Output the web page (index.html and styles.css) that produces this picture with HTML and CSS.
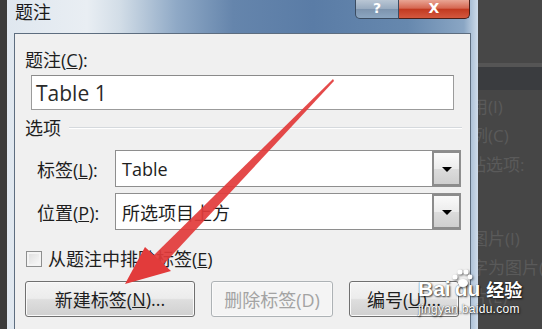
FILE: index.html
```html
<!DOCTYPE html>
<html lang="zh-CN">

<head>
  <meta charset="UTF-8">
  <meta name="viewport" content="width=device-width, initial-scale=1.0">
  <title>题注</title>
  <link rel="stylesheet" href="styles.css">
</head>

<body>
  <div class="screen">
    <div class="edge"></div>

    <div class="window">
      <div class="titlebar">
        <span class="title">题注</span>
        <div class="caption-buttons">
          <span class="btn-help">?</span>
          <span class="btn-close">X</span>
        </div>
      </div>

      <div class="client">
        <div class="field-label">题注(<u>C</u>):</div>
        <div class="text-input">Table 1</div>

        <div class="group-head">
          <span>选项</span>
          <span class="group-line"></span>
        </div>

        <div class="option-row">
          <span class="option-label">标签(<u>L</u>):</span>
          <div class="combo">
            <span class="combo-value">Table</span>
            <span class="combo-drop"><span class="arrow-down"></span></span>
          </div>
        </div>

        <div class="option-row second">
          <span class="option-label">位置(<u>P</u>):</span>
          <div class="combo">
            <span class="combo-value">所选项目上方</span>
            <span class="combo-drop"><span class="arrow-down"></span></span>
          </div>
        </div>

        <div class="check-row">
          <span class="checkbox"></span>
          <span>从题注中排除标签(<u>E</u>)</span>
        </div>

        <div class="button-row">
          <span class="button wide">新建标签(<u>N</u>)...</span>
          <span class="button mid disabled">删除标签(D)</span>
          <span class="button narrow">编号(<u>U</u>)...</span>
        </div>
      </div>
    </div>

    <div class="backdrop">
      <div class="ghost-line shift">使用(I)</div>
      <div class="ghost-line shift">示例(C)</div>
      <div class="ghost-line shift-half">粘贴选项:</div>
      <div class="ghost-line gap shift">(T)</div>
      <div class="ghost-line shift">嵌图片(I)</div>
      <div class="ghost-line shift">文字为图片(</div>
      <div class="ghost-line shift">图片(E)</div>
    </div>

    <svg class="pointer" width="542" height="329" viewBox="0 0 542 329">
      <defs>
        <filter id="soft">
          <feGaussianBlur stdDeviation="0.7" />
        </filter>
      </defs>
      <g filter="url(#soft)" fill="#e23a3a">
        <polygon points="333,79 334,81 162,266 153,256" opacity="0.92" />
        <polygon points="125,284 145,247 171,271" />
      </g>
    </svg>

    <div class="watermark">
      <div class="wm-brand">
        <span>Bai</span>
        <svg class="paw" width="22" height="28" viewBox="0 0 22 28">
          <circle cx="4" cy="9" r="2.6" />
          <circle cx="9" cy="4" r="2.6" />
          <circle cx="15" cy="4" r="2.6" />
          <circle cx="19" cy="9" r="2.4" />
          <ellipse cx="12" cy="15" rx="5" ry="4" />
        </svg>
        <span class="wm-du">du</span>
        <span class="wm-jy">经验</span>
      </div>
      <div class="wm-url">jingyan.baidu.com</div>
    </div>
  </div>
</body>

</html>
```

FILE: styles.css
```css
body {
  margin: 0;
  font-family: "Open Sans", "Noto Sans CJK SC", sans-serif;
  color: #1e1e1e;
}

.screen {
  position: relative;
  width: 542px;
  height: 329px;
  display: flex;
  overflow: hidden;
  background-color: #454545;
}

.edge {
  width: 7px;
  background-color: #3b3b3b;
}

/* aero glass frame */
.window {
  width: 471px;
  padding: 0 7px;
  box-sizing: border-box;
  display: flex;
  flex-direction: column;
  background: linear-gradient(to right, #dfe7ef 0, #e9eef3 17%, #d2dde7 24%, #8fa9c6 36%, #6585ac 48%, #5a7ca6 65%, #6688ae 85%, #8aa6c4 97%, #cfdcea 100%);
}

.titlebar {
  height: 33px;
  display: flex;
  justify-content: space-between;
  align-items: flex-start;
}

.title {
  padding-left: 1px;
  margin-top: 1px;
  font-size: 18px;
  line-height: 22px;
  color: #1a1a1a;
}

.caption-buttons {
  display: flex;
  margin-right: 1px;
}

.btn-help,
.btn-close {
  height: 18px;
  line-height: 17px;
  text-align: center;
  color: #ffffff;
  font-family: "DejaVu Sans", sans-serif;
  font-weight: bold;
  font-size: 14px;
}

.btn-help {
  width: 42px;
  border: 1px solid #3b4c61;
  border-top: none;
  border-radius: 0 0 0 5px;
  background: linear-gradient(#b9c6d4, #97aabf 50%, #7d94ae 52%, #8ca6c1);
}

.btn-close {
  width: 70px;
  border: 1px solid #4a1f19;
  border-left: none;
  border-top: none;
  border-radius: 0 0 5px 0;
  background: linear-gradient(#e9a594, #d66852 45%, #c23a21 52%, #d4583e);
}

.client {
  flex: 1;
  border: 1px solid #5d6d7f;
  border-bottom: none;
  background-color: #f0f0f0;
  padding-top: 15px;
}

.field-label {
  margin-left: 10px;
  font-size: 18px;
  line-height: 22px;
}

.text-input {
  margin: 4px 16px 0 16px;
  height: 35px;
  box-sizing: border-box;
  border: 1px solid #9b9b9b;
  border-top-color: #8a8a8a;
  background-color: #ffffff;
  padding-left: 4px;
  display: flex;
  align-items: center;
  font-size: 21px;
  color: #2a2a2a;
}

.group-head {
  margin: 7px 8px 0 10px;
  display: flex;
  align-items: center;
  gap: 8px;
  font-size: 18px;
  line-height: 22px;
}

.group-line {
  flex: 1;
  border-top: 1px solid #d5d9dd;
  border-bottom: 1px solid #ffffff;
}

.option-row {
  margin: 11px 9px 0 22px;
  display: flex;
  align-items: center;
  font-size: 18px;
}

.option-row.second {
  margin-top: 6px;
}

.option-label {
  width: 78px;
  flex-shrink: 0;
}

.combo {
  flex: 1;
  height: 37px;
  box-sizing: border-box;
  border: 1px solid #8e8e8e;
  background-color: #ffffff;
  display: flex;
}

.combo-value {
  flex: 1;
  padding-left: 6px;
  display: flex;
  align-items: center;
  font-size: 18px;
}

.combo-drop {
  width: 25px;
  border: 2px solid #8c8c8c;
  border-right-width: 1px;
  background: linear-gradient(#fafafa, #ececec 50%, #dcdcdc 52%, #cfcfcf);
  display: flex;
  align-items: center;
  justify-content: center;
}

.arrow-down {
  width: 0;
  height: 0;
  border-left: 5px solid transparent;
  border-right: 5px solid transparent;
  border-top: 5px solid #000000;
  margin-top: 2px;
}

.check-row {
  margin: 18px 0 0 11px;
  display: flex;
  align-items: center;
  gap: 6px;
  font-size: 18px;
  line-height: 22px;
}

.checkbox {
  width: 16px;
  height: 16px;
  box-sizing: border-box;
  border: 1px solid #8e8f8f;
  background: linear-gradient(135deg, #dcdcdc, #fbfbfb);
  box-shadow: inset 0 0 0 2px #f4f4f4;
}

.button-row {
  margin: 11px 0 0 10px;
  display: flex;
  gap: 16px;
}

.button {
  height: 36px;
  box-sizing: border-box;
  border: 1px solid #707070;
  border-radius: 3px;
  background: linear-gradient(#f4f4f4, #ececec 48%, #dedede 52%, #d0d0d0);
  box-shadow: inset 0 0 0 1px #fafafa;
  display: flex;
  align-items: center;
  justify-content: center;
  font-size: 18px;
}

.button.wide {
  width: 170px;
}

.button.mid {
  width: 122px;
}

.button.narrow {
  width: 110px;
}

.button.disabled {
  border-color: #adb2b5;
  background: #f4f4f4;
  color: #a3a3a3;
}

/* the application behind the dialog */
.backdrop {
  flex: 1;
  padding-top: 92px;
  background: linear-gradient(#474747 0, #474747 63px, #555555 63px, #555555 67px, #3a3c3f 67px, #3a3c3f 90px, #464646 90px);
  overflow: hidden;
}

.ghost-line {
  height: 29px;
  line-height: 29px;
  font-size: 17px;
  color: #5a5a5a;
  white-space: nowrap;
}

.ghost-line.shift {
  text-indent: -24px;
}

.ghost-line.shift-half {
  text-indent: -26px;
}

.ghost-line.gap {
  margin-top: 16px;
}

.pointer {
  position: absolute;
  left: 0;
  top: 0;
  pointer-events: none;
}

.watermark {
  position: absolute;
  z-index: 2;
  left: 418px;
  top: 268px;
  color: #ffffff;
  text-shadow: 1px 1px 2px rgba(0, 0, 0, 0.75), 0 0 1px rgba(0, 0, 0, 0.6);
  pointer-events: none;
}

.wm-brand {
  display: flex;
  align-items: flex-end;
  font-family: "Liberation Sans", sans-serif;
  font-weight: bold;
  font-size: 21px;
  line-height: 22px;
}

.paw {
  fill: #ffffff;
  filter: drop-shadow(1px 1px 1px rgba(0, 0, 0, 0.6));
  margin: 0 -18px 4px 0;
}

.wm-du {
  margin-right: 6px;
}

.wm-jy {
  font-family: "Noto Sans CJK SC", sans-serif;
  font-size: 18px;
}

.wm-url {
  font-family: "Liberation Sans", sans-serif;
  font-size: 12px;
  letter-spacing: 0.3px;
  margin-top: 2px;
}
```
